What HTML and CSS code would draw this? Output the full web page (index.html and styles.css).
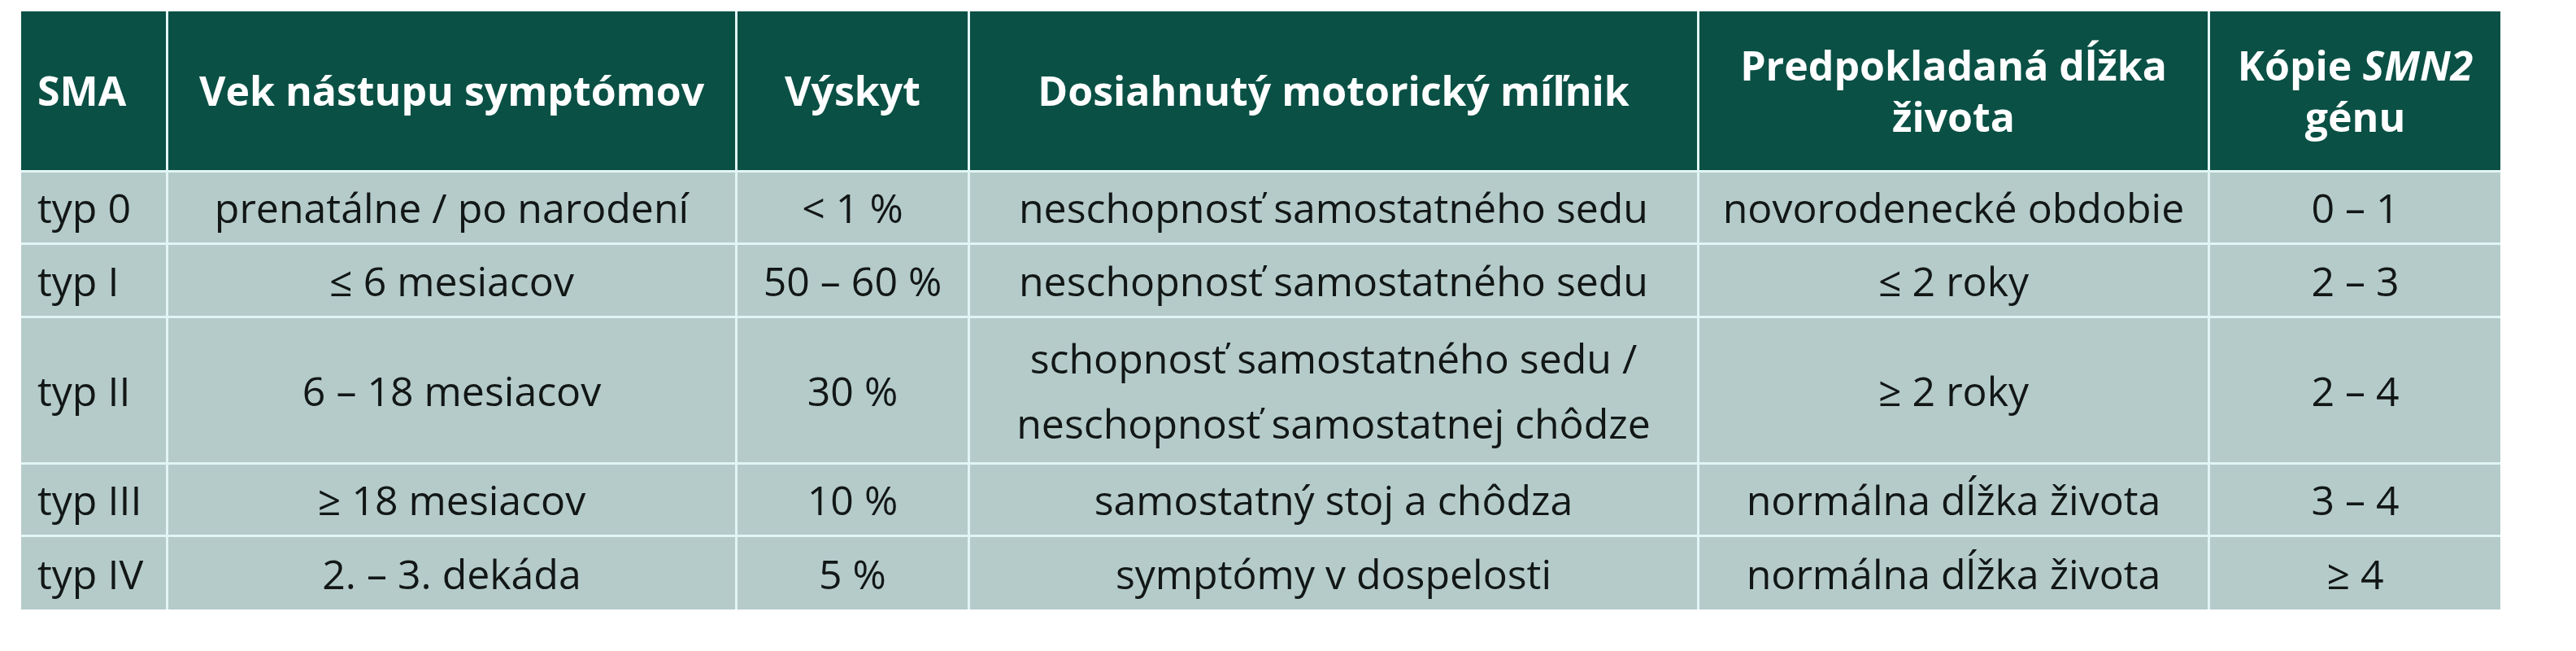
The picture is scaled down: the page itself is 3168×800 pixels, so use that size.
FILE: index.html
```html
<!DOCTYPE html>
<html lang="sk">
<head>
<meta charset="utf-8">
<title>SMA</title>
<link rel="stylesheet" href="styles.css">
</head>
<body>
<div class="sma-table">
  <div class="cell head left"><span>SMA</span></div>
  <div class="cell head"><span>Vek nástupu symptómov</span></div>
  <div class="cell head"><span>Výskyt</span></div>
  <div class="cell head"><span>Dosiahnutý motorický míľnik</span></div>
  <div class="cell head"><span>Predpokladaná dĺžka<br>života</span></div>
  <div class="cell head"><span>Kópie <i>SMN2</i><br>génu</span></div>

  <div class="cell left"><span>typ 0</span></div>
  <div class="cell"><span>prenatálne / po narodení</span></div>
  <div class="cell"><span>&lt; 1 %</span></div>
  <div class="cell"><span>neschopnosť samostatného sedu</span></div>
  <div class="cell"><span>novorodenecké obdobie</span></div>
  <div class="cell"><span>0 – 1</span></div>

  <div class="cell left"><span>typ I</span></div>
  <div class="cell"><span>≤ 6 mesiacov</span></div>
  <div class="cell"><span>50 – 60 %</span></div>
  <div class="cell"><span>neschopnosť samostatného sedu</span></div>
  <div class="cell"><span>≤ 2 roky</span></div>
  <div class="cell"><span>2 – 3</span></div>

  <div class="cell left"><span>typ II</span></div>
  <div class="cell"><span>6 – 18 mesiacov</span></div>
  <div class="cell"><span>30 %</span></div>
  <div class="cell"><span>schopnosť samostatného sedu /<br>neschopnosť samostatnej chôdze</span></div>
  <div class="cell"><span>≥ 2 roky</span></div>
  <div class="cell"><span>2 – 4</span></div>

  <div class="cell left"><span>typ III</span></div>
  <div class="cell"><span>≥ 18 mesiacov</span></div>
  <div class="cell"><span>10 %</span></div>
  <div class="cell"><span>samostatný stoj a chôdza</span></div>
  <div class="cell"><span>normálna dĺžka života</span></div>
  <div class="cell"><span>3 – 4</span></div>

  <div class="cell left"><span>typ IV</span></div>
  <div class="cell"><span>2. – 3. dekáda</span></div>
  <div class="cell"><span>5 %</span></div>
  <div class="cell"><span>symptómy v dospelosti</span></div>
  <div class="cell"><span>normálna dĺžka života</span></div>
  <div class="cell"><span>≥ 4</span></div>
</div>
</body>
</html>
```

FILE: styles.css
```css
html, body {
  margin: 0;
  padding: 0;
  background: #ffffff;
}

body {
  padding: 14px 0 0 26px;
  font-family: "Open Sans", "Noto Sans", "Liberation Sans", sans-serif;
}

.sma-table {
  display: grid;
  grid-template-columns: 178px 697px 283px 894px 625px 357px;
  grid-template-rows: 195px 86px 87px 177px 86px 89px;
  gap: 3px;
  width: max-content;
  background: #e2f5f5;
}

.cell {
  display: flex;
  align-items: center;
  justify-content: center;
  text-align: center;
  background: #b4cbca;
  color: #121716;
  font-size: 50px;
  line-height: 80px;
  padding: 0 10px;
  white-space: nowrap;
}

.cell.left {
  justify-content: flex-start;
  text-align: left;
  padding-left: 20px;
}

.cell.head {
  background: #0a5045;
  color: #ffffff;
  font-weight: 700;
  line-height: 63px;
  letter-spacing: 0;
}
```
